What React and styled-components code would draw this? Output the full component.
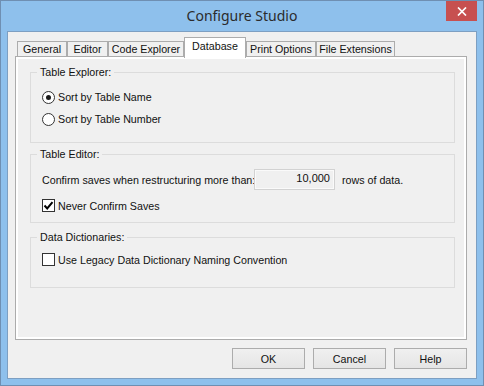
import React, { useState } from 'react';
import styled, { createGlobalStyle } from 'styled-components';

const GlobalStyle = createGlobalStyle`
  html, body {
    margin: 0;
    padding: 0;
    background: #8ec0ec;
  }
  * {
    box-sizing: border-box;
  }
`;

const tabs = [
  { label: 'General', width: 50 },
  { label: 'Editor', width: 41 },
  { label: 'Code Explorer', width: 76 },
  { label: 'Database', width: 62 },
  { label: 'Print Options', width: 70 },
  { label: 'File Extensions', width: 79 },
];

const CloseIcon = () => (
  <svg width="10" height="9" viewBox="0 0 10 9">
    <path d="M1 0.5 L9 8.5 M9 0.5 L1 8.5" stroke="#fff" strokeWidth="1.7" fill="none" />
  </svg>
);

const CheckMark = () => (
  <svg width="11" height="11" viewBox="0 0 11 11">
    <path d="M1.5 5.5 L4.2 8.4 L9.5 2.2" stroke="#000" strokeWidth="2" fill="none" />
  </svg>
);

const App = () => {
  const [activeTab, setActiveTab] = useState('Database');
  const [sortBy, setSortBy] = useState('name');
  const [neverConfirm, setNeverConfirm] = useState(true);
  const [legacy, setLegacy] = useState(false);

  return (
    <>
      <GlobalStyle />
      <Window>
        <TitleBar>
          <span />
          <Title>Configure Studio</Title>
          <CloseButton>
            <CloseIcon />
          </CloseButton>
        </TitleBar>
        <Client>
          <TabStrip>
            {tabs.map((t) => (
              <Tab
                key={t.label}
                $w={t.width}
                $active={t.label === activeTab}
                onClick={() => setActiveTab(t.label)}
              >
                {t.label}
              </Tab>
            ))}
          </TabStrip>
          <Panel>
            <Group $h={71}>
              <Legend>Table Explorer:</Legend>
              <GroupBody $pt={13}>
                <OptionRow onClick={() => setSortBy('name')}>
                  <Radio $checked={sortBy === 'name'} />
                  Sort by Table Name
                </OptionRow>
                <OptionRow onClick={() => setSortBy('number')}>
                  <Radio $checked={sortBy === 'number'} />
                  Sort by Table Number
                </OptionRow>
              </GroupBody>
            </Group>

            <Group $h={69} $mt={11}>
              <Legend>Table Editor:</Legend>
              <GroupBody $pt={14}>
                <FieldRow>
                  <FieldLabel>Confirm saves when restructuring more than:</FieldLabel>
                  <NumberBox>10,000</NumberBox>
                  <Suffix>rows of data.</Suffix>
                </FieldRow>
                <CheckRow $mt={9} onClick={() => setNeverConfirm(!neverConfirm)}>
                  <Checkbox>{neverConfirm && <CheckMark />}</Checkbox>
                  Never Confirm Saves
                </CheckRow>
              </GroupBody>
            </Group>

            <Group $h={51} $mt={14}>
              <Legend>Data Dictionaries:</Legend>
              <GroupBody $pt={15}>
                <CheckRow onClick={() => setLegacy(!legacy)}>
                  <Checkbox>{legacy && <CheckMark />}</Checkbox>
                  Use Legacy Data Dictionary Naming Convention
                </CheckRow>
              </GroupBody>
            </Group>
          </Panel>
          <ButtonRow>
            <Button>OK</Button>
            <Button>Cancel</Button>
            <Button>Help</Button>
          </ButtonRow>
        </Client>
      </Window>
    </>
  );
};

export default App;

const Window = styled.div`
  width: 484px;
  height: 386px;
  background: #8ec0ec;
  border: 1px solid #6f8fb2;
  padding: 0 6px 6px 6px;
  display: flex;
  flex-direction: column;
  font-family: "Liberation Sans", Arial, sans-serif;
  font-size: 10.7px;
  color: #111;
`;

const TitleBar = styled.div`
  height: 30px;
  display: grid;
  grid-template-columns: 31px 1fr 31px;
  align-items: start;
`;

const Title = styled.div`
  font-family: "Noto Sans", "Open Sans", sans-serif;
  font-size: 14px;
  color: #2b2b2b;
  text-align: center;
  line-height: 29px;
`;

const CloseButton = styled.div`
  width: 31px;
  height: 20px;
  background: #c75050;
  display: flex;
  align-items: center;
  justify-content: center;
`;

const Client = styled.div`
  flex: 1;
  background: #f0f0f0;
  border: 1px solid #7d9fc2;
  padding: 5px 9px 8px 7px;
  display: flex;
  flex-direction: column;
`;

const TabStrip = styled.div`
  height: 20px;
  display: flex;
  align-items: flex-end;
  padding-left: 2px;
  position: relative;
  z-index: 1;
`;

const Tab = styled.div`
  width: ${(p) => p.$w}px;
  height: ${(p) => (p.$active ? 21 : 16)}px;
  margin-bottom: ${(p) => (p.$active ? -1 : 0)}px;
  background: ${(p) => (p.$active ? '#fff' : '#f0f0f0')};
  border: 1px solid #acacac;
  border-bottom: ${(p) => (p.$active ? 'none' : '1px solid #acacac')};
  display: flex;
  justify-content: center;
  align-items: ${(p) => (p.$active ? 'flex-start' : 'center')};
  padding-top: ${(p) => (p.$active ? 2 : 0)}px;
  white-space: nowrap;
  cursor: default;
`;

const Panel = styled.div`
  height: 284px;
  margin-top: -1px;
  background: #f0f0f0;
  border: 1px solid #acacac;
  box-shadow: inset 0 0 0 2px #fff;
  padding: 15px 11px 0 14px;
  display: flex;
  flex-direction: column;
`;

const Group = styled.div`
  position: relative;
  height: ${(p) => p.$h}px;
  margin-top: ${(p) => p.$mt || 0}px;
  border: 1px solid #dcdcdc;
  flex-shrink: 0;
`;

const Legend = styled.div`
  position: absolute;
  top: -7px;
  left: 6px;
  padding: 0 3px;
  background: #f0f0f0;
  line-height: 13px;
  white-space: nowrap;
`;

const GroupBody = styled.div`
  padding: ${(p) => p.$pt}px 10px 0 11px;
  display: flex;
  flex-direction: column;
`;

const OptionRow = styled.div`
  height: 22px;
  display: flex;
  align-items: center;
  gap: 3px;
  white-space: nowrap;
  cursor: default;
`;

const Radio = styled.span`
  width: 13px;
  height: 13px;
  border-radius: 50%;
  border: 1px solid #333;
  background: #fff;
  display: flex;
  align-items: center;
  justify-content: center;
  flex-shrink: 0;

  &::after {
    content: '';
    width: 5px;
    height: 5px;
    border-radius: 50%;
    background: #1a1a1a;
    display: ${(p) => (p.$checked ? 'block' : 'none')};
  }
`;

const FieldRow = styled.div`
  height: 21px;
  display: flex;
  align-items: center;
  white-space: nowrap;
`;

const FieldLabel = styled.span`
  width: 212px;
  flex-shrink: 0;
`;

const NumberBox = styled.div`
  width: 81px;
  height: 21px;
  border: 1px solid #d2d2d2;
  box-shadow: inset 0 0 0 1px #fafafa;
  background: #f0f0f0;
  text-align: right;
  padding-right: 4px;
  line-height: 17px;
  font-size: 11px;
`;

const Suffix = styled.span`
  margin-left: 7px;
`;

const CheckRow = styled.div`
  height: 13px;
  margin-top: ${(p) => p.$mt || 0}px;
  display: flex;
  align-items: center;
  gap: 3px;
  white-space: nowrap;
  cursor: default;
`;

const Checkbox = styled.span`
  width: 13px;
  height: 13px;
  border: 1px solid #333;
  background: #fff;
  display: flex;
  align-items: center;
  justify-content: center;
  flex-shrink: 0;
`;

const ButtonRow = styled.div`
  margin-top: 8px;
  display: flex;
  justify-content: flex-end;
  gap: 8px;
`;

const Button = styled.button`
  width: 73px;
  height: 21px;
  padding: 0;
  border: 1px solid #acacac;
  background: linear-gradient(#f0f0f0, #e5e5e5);
  font-family: "Liberation Sans", Arial, sans-serif;
  font-size: 10.7px;
  color: #111;
`;
